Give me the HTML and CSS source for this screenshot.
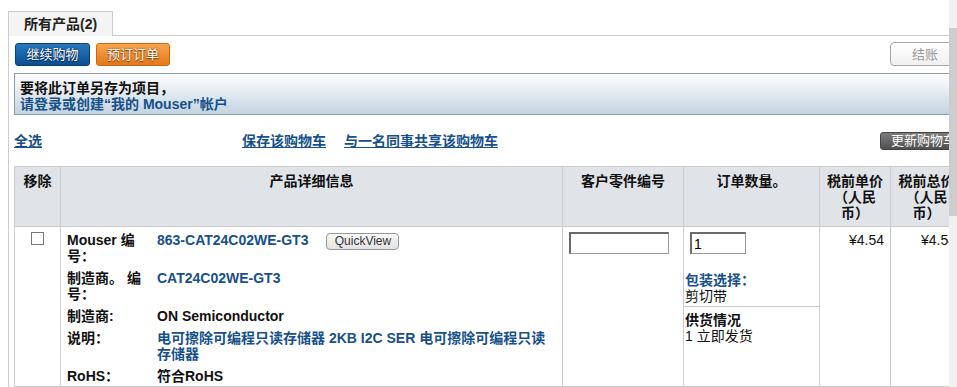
FILE: index.html
```html
<!DOCTYPE html>
<html lang="zh-CN">
<head>
  <meta charset="UTF-8">
  <meta name="viewport" content="width=device-width, initial-scale=1.0">
  <title>购物车</title>
  <link rel="stylesheet" href="styles.css">
</head>
<body>
<div class="page">
  <div class="viewport">
    <div class="tabs">
      <div class="tab">所有产品(2)</div>
      <div class="tab-filler"></div>
    </div>

    <div class="panel">
      <div class="toolbar">
        <div class="toolbar-left">
          <button class="btn btn-blue">继续购物</button>
          <button class="btn btn-orange">预订订单</button>
        </div>
        <button class="btn btn-checkout">结账</button>
      </div>

      <div class="notice">
        <p class="notice-title">要将此订单另存为项目，</p>
        <p><a href="#" class="notice-link">请登录或创建“我的 Mouser”帐户</a></p>
      </div>

      <div class="actions">
        <a href="#" class="link">全选</a>
        <div class="action-links">
          <a href="#" class="link">保存该购物车</a>
          <a href="#" class="link">与一名同事共享该购物车</a>
        </div>
        <button class="btn-update">更新购物车</button>
      </div>

      <table class="cart">
        <colgroup>
          <col class="col-remove">
          <col class="col-details">
          <col class="col-part">
          <col class="col-qty">
          <col class="col-price">
          <col class="col-total">
        </colgroup>
        <thead>
          <tr>
            <th>移除</th>
            <th>产品详细信息</th>
            <th>客户零件编号</th>
            <th>订单数量。</th>
            <th>税前单价（人民币）</th>
            <th>税前总价（人民币）</th>
          </tr>
        </thead>
        <tbody>
          <tr>
            <td class="cell-remove"><input type="checkbox" class="check"></td>
            <td class="cell-details">
              <table class="details">
                <tr>
                  <td class="label">Mouser 编号：</td>
                  <td><a href="#" class="value-link">863-CAT24C02WE-GT3</a><button class="btn-quick">QuickView</button></td>
                </tr>
                <tr>
                  <td class="label">制造商。 编号：</td>
                  <td><a href="#" class="value-link">CAT24C02WE-GT3</a></td>
                </tr>
                <tr>
                  <td class="label">制造商:</td>
                  <td class="value-strong">ON Semiconductor</td>
                </tr>
                <tr>
                  <td class="label">说明：</td>
                  <td class="value-desc">电可擦除可编程只读存储器 2KB I2C SER 电可擦除可编程只读存储器</td>
                </tr>
                <tr>
                  <td class="label">RoHS：</td>
                  <td class="value-strong">符合RoHS</td>
                </tr>
              </table>
            </td>
            <td class="cell-part"><input type="text" class="field field-part"></td>
            <td class="cell-qty">
              <div class="qty-input"><input type="text" class="field field-qty" value="1"></div>
              <div class="pack">
                <div class="pack-title">包装选择：</div>
                <div>剪切带</div>
              </div>
              <div class="stock">
                <div class="stock-title">供货情况</div>
                <div>1 立即发货</div>
              </div>
            </td>
            <td class="cell-price">¥4.54</td>
            <td class="cell-price">¥4.54</td>
          </tr>
        </tbody>
      </table>
    </div>
  </div>
  <div class="scrollbar"><div class="scroll-thumb"></div></div>
</div>
</body>
</html>
```

FILE: styles.css
```css
body {
  margin: 0;
  font-family: "Liberation Sans", "Noto Sans CJK JP", "Noto Sans CJK SC", sans-serif;
  font-size: 14px;
  line-height: 16px;
  color: #111;
  background: #fff;
}
p {
  margin: 0;
}
a {
  color: #17508a;
}
.page {
  display: flex;
  height: 387px;
  overflow: hidden;
}
.viewport {
  width: 949px;
  overflow: hidden;
  flex-shrink: 0;
}
.scrollbar {
  width: 8px;
  background: #f1f1f1;
  padding-top: 28px;
}
.scroll-thumb {
  height: 188px;
  background: #cdcdcd;
}

/* tabs */
.tabs {
  display: flex;
  padding: 11px 0 0 8px;
  width: 954px;
}
.tab {
  border: 1px solid #ccc;
  border-bottom: none;
  background: #f4f4f4;
  padding: 4px 15px;
  font-weight: bold;
  color: #222;
}
.tab-filler {
  flex: 1;
  border-bottom: 1px solid #ccc;
}
.panel {
  margin-left: 8px;
  border-left: 1px solid #ccc;
  padding: 6px 0 0 5px;
  width: 948px;
}

/* toolbar */
.toolbar {
  display: flex;
  justify-content: space-between;
  align-items: flex-start;
}
.toolbar-left {
  display: flex;
  gap: 6px;
  padding-left: 1px;
  padding-top: 1px;
}
.btn {
  font-family: inherit;
  font-size: 13px;
  line-height: 21px;
  height: 23px;
  padding: 0;
  border-radius: 3px;
  cursor: pointer;
  white-space: nowrap;
}
.btn-blue {
  color: #fff;
  background: linear-gradient(#2a78bd, #0b4f91);
  border: 1px solid #0b3f72;
  text-shadow: 0 0 2px #062a52, 0 1px 1px #062a52;
  width: 75px;
}
.btn-orange {
  color: #fff;
  background: linear-gradient(#f7a54e, #e4781a);
  border: 1px solid #c9680e;
  text-shadow: 0 0 2px #8a3f00, 0 1px 1px #8a3f00;
  width: 74px;
}
.btn-checkout {
  color: #999;
  background: linear-gradient(#fff, #f0f0f0);
  border: 1px solid #a8a8a8;
  border-radius: 4px;
  height: 24px;
  width: 72px;
  padding-right: 2px;
}

/* notice */
.notice {
  margin-top: 7px;
  border: 1px solid #8c9bad;
  background: linear-gradient(#fbfcfd, #eef2f6 30%, #c3d3e1);
  padding: 6px 5px 2px;
  font-weight: bold;
}
.notice-link {
  text-decoration: none;
}

/* actions */
.actions {
  display: flex;
  align-items: center;
  margin-top: 17px;
  height: 18px;
}
.link {
  font-weight: bold;
}
.action-links {
  display: flex;
  gap: 18px;
  margin-left: 200px;
}
.btn-update {
  margin-left: auto;
  font-family: inherit;
  font-size: 13px;
  line-height: 16px;
  height: 18px;
  width: 82px;
  padding: 0 0 0 10px;
  text-align: left;
  white-space: nowrap;
  color: #fff;
  background: linear-gradient(#7c7c7c, #505050);
  border: 1px solid #444;
  border-radius: 3px;
}

/* cart table */
.cart {
  margin-top: 16px;
  width: 948px;
  border-collapse: collapse;
  table-layout: fixed;
}
.col-remove { width: 46px; }
.col-details { width: 502px; }
.col-part { width: 121px; }
.col-qty { width: 136px; }
.col-price { width: 71px; }
.col-total { width: 72px; }
.cart th {
  background: #e0e3e8;
  border: 1px solid #ccc;
  padding: 6px 6px 5px;
  height: 48px;
  vertical-align: top;
  text-align: center;
  font-weight: bold;
}
.cart > tbody > tr > td {
  border: 1px solid #ccc;
  vertical-align: top;
  padding: 5px 6px;
}
.cell-remove {
  text-align: center;
}
.check {
  appearance: none;
  width: 13px;
  height: 13px;
  margin: 0;
  border: 1px solid #767676;
  background: #fff;
  vertical-align: top;
}
.cart > tbody > tr > td.cell-details {
  padding: 2px 6px 0;
}
.details {
  border-collapse: collapse;
  width: 100%;
}
.details td {
  padding: 3px 0;
  vertical-align: top;
}
.details tr:last-child td {
  padding-bottom: 2px;
}
.details .label {
  width: 84px;
  padding-right: 6px;
  font-weight: bold;
}
.value-link {
  font-weight: bold;
  text-decoration: none;
}
.value-strong {
  font-weight: bold;
}
.value-desc {
  font-weight: bold;
  color: #17508a;
}
.btn-quick {
  margin-left: 18px;
  vertical-align: top;
  margin-top: 1px;
  height: 17px;
  width: 73px;
  padding: 0;
  font-family: inherit;
  font-size: 12px;
  line-height: 15px;
  color: #333;
  background: linear-gradient(#f8f8f8, #e2e2e2);
  border: 1px solid #999;
  border-radius: 4px;
}
.field {
  box-sizing: border-box;
  height: 22px;
  margin: 0;
  padding: 0 2px;
  font-family: inherit;
  font-size: 14px;
  border-style: solid;
  border-width: 2px 1px 1px 2px;
  border-color: #6a6a6a #999 #999 #6a6a6a;
  background: #fff;
  display: block;
}
.field-part {
  width: 100px;
}
.field-qty {
  width: 56px;
}
.cart > tbody > tr > td.cell-qty {
  padding: 0;
}
.qty-input {
  padding: 5px 6px 0;
}
.pack {
  margin-top: 18px;
  padding: 0 0 2px 1px;
  border-bottom: 1px solid #ccc;
}
.pack-title {
  font-weight: bold;
  color: #17508a;
}
.stock {
  padding: 5px 0 0 1px;
}
.stock-title {
  font-weight: bold;
}
.cart > tbody > tr > td.cell-price {
  text-align: right;
}
```
